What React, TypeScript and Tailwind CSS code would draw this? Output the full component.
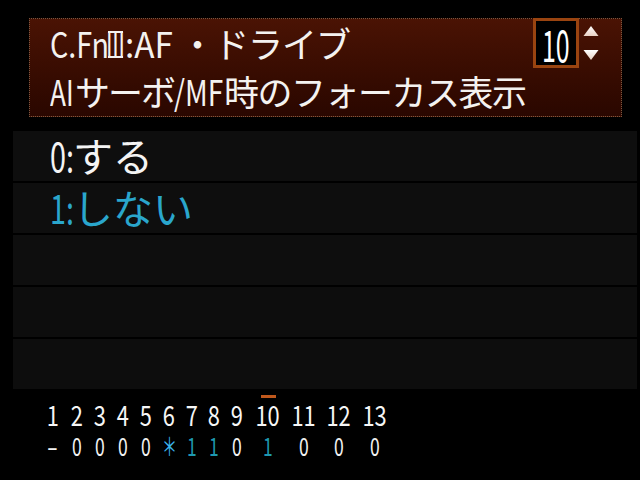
import React from "react";

type CProps = { w: string; s: string; children: React.ReactNode };

const C = ({ w, s, children }: CProps) => (
  <span className={`inline-block whitespace-nowrap align-top ${w}`}>
    <span className={`inline-block origin-left ${s}`}>{children}</span>
  </span>
);

const cols: { w: string; top: string; bottom: string; bc: string; bs: string; bar?: boolean }[] = [
  { w: "w-[25px]", top: "1", bottom: "-", bc: "text-[#f2f2f2]", bs: "scale-x-[1.3]" },
  { w: "w-[23px]", top: "2", bottom: "0", bc: "text-[#f2f2f2]", bs: "scale-x-[0.7]" },
  { w: "w-[23px]", top: "3", bottom: "0", bc: "text-[#f2f2f2]", bs: "scale-x-[0.7]" },
  { w: "w-[23px]", top: "4", bottom: "0", bc: "text-[#f2f2f2]", bs: "scale-x-[0.7]" },
  { w: "w-[23px]", top: "5", bottom: "0", bc: "text-[#f2f2f2]", bs: "scale-x-[0.7]" },
  { w: "w-[24px]", top: "6", bottom: "＊", bc: "text-[#3ab4ec]", bs: "scale-x-[0.6]" },
  { w: "w-[22px]", top: "7", bottom: "1", bc: "text-[#1e98b0]", bs: "scale-x-[0.7]" },
  { w: "w-[22px]", top: "8", bottom: "1", bc: "text-[#1e98b0]", bs: "scale-x-[0.7]" },
  { w: "w-[23px]", top: "9", bottom: "0", bc: "text-[#f2f2f2]", bs: "scale-x-[0.7]" },
  { w: "w-[40px]", top: "10", bottom: "1", bc: "text-[#1e98b0]", bs: "scale-x-[0.7]", bar: true },
  { w: "w-[32px]", top: "11", bottom: "0", bc: "text-[#f2f2f2]", bs: "scale-x-[0.7]" },
  { w: "w-[38px]", top: "12", bottom: "0", bc: "text-[#f2f2f2]", bs: "scale-x-[0.7]" },
  { w: "w-[34px]", top: "13", bottom: "0", bc: "text-[#f2f2f2]", bs: "scale-x-[0.7]" },
];

export default function App() {
  return (
    <div
      className="w-[640px] h-[480px] bg-black overflow-hidden flex flex-col text-[#f4f2f0]"
      style={{ fontFamily: '"Noto Sans CJK JP", "Noto Sans", sans-serif' }}
    >
      {/* Header */}
      <div className="relative ml-[29px] mt-[18px] w-[593px] h-[99px] shrink-0 border border-dotted border-[#7a5840] bg-linear-to-b from-[#4a1304] to-[#2a0700] text-[35px] leading-[48px]">
        <div className="pl-[20px] whitespace-nowrap">
          <C w="w-[56px]" s="scale-x-[0.82]">C.Fn</C>
          <span className="inline-flex justify-center overflow-visible w-[15px] h-[27px] mx-[2px] border-y-[2px] border-[#f4f2f0]">
            <span className="inline-block leading-[20px] scale-x-[0.6]">Ⅲ</span>
          </span>
          <C w="w-[55px]" s="scale-x-[0.95]">:AF</C>
          <span className="tracking-[-1px]">・ドライブ</span>
        </div>
        <div className="pl-[20px] whitespace-nowrap">
          <C w="w-[25px]" s="scale-x-[0.75]">AI</C>
          <span className="tracking-[-2px]">サーボ</span>
          <C w="w-[50px]" s="scale-x-[0.8]">/MF</C>
          <span className="tracking-[-1.5px]">時のフォーカス表示</span>
        </div>
        {/* value spinner */}
        <div className="absolute left-[503px] top-[-1px] w-[46px] h-[50px] border-[3px] border-[#9a4410] bg-black flex items-center justify-center text-[43px] leading-[43px] text-white">
          <span className="inline-block scale-x-[0.58]">10</span>
        </div>
        <svg className="absolute left-[553px] top-[7px]" width="16" height="34" viewBox="0 0 16 34">
          <defs>
            <linearGradient id="ag" x1="0" y1="0" x2="0" y2="1">
              <stop offset="0" stopColor="#ffffff" />
              <stop offset="1" stopColor="#e8d2c4" />
            </linearGradient>
          </defs>
          <polygon points="8,0 15.5,10 0.5,10" fill="url(#ag)" />
          <polygon points="0.5,24 15.5,24 8,34" fill="url(#ag)" />
        </svg>
      </div>

      {/* Options list */}
      <div className="ml-[13px] mt-[14px] w-[624px] flex flex-col gap-[2px] shrink-0">
        <div className="h-[50px] bg-[#0e0e0e] pl-[37px] text-[40px] leading-[48px] whitespace-nowrap text-[#f4f4f4]">
          <C w="w-[23px]" s="scale-x-[0.72]">0:</C>
          <span>する</span>
        </div>
        <div className="h-[50px] bg-[#0e0e0e] pl-[37px] text-[40px] leading-[48px] whitespace-nowrap text-[#2aa6cc]">
          <C w="w-[23px]" s="scale-x-[0.72]">1:</C>
          <span>しない</span>
        </div>
        <div className="h-[50px] bg-[#0e0e0e]" />
        <div className="h-[50px] bg-[#0d0d0d]" />
        <div className="h-[50px] bg-[#0d0d0d]" />
      </div>

      {/* Function number strip */}
      <div className="ml-[40px] mt-[6px] flex">
        {cols.map((c) => (
          <div key={c.top} className={`${c.w} flex flex-col items-center`}>
            <div className={`h-[3px] w-[15px] mb-[2px] ${c.bar ? "bg-[#c0581c]" : ""}`} />
            <div className="text-[28px] leading-[28px] text-[#f6f6f6] whitespace-nowrap">
              <span className="inline-block scale-x-[0.78]">{c.top}</span>
            </div>
            <div className={`mt-[5px] text-[25px] leading-[25px] whitespace-nowrap ${c.bc}`}>
              <span className={`inline-block ${c.bs}`}>{c.bottom}</span>
            </div>
          </div>
        ))}
      </div>
    </div>
  );
}
